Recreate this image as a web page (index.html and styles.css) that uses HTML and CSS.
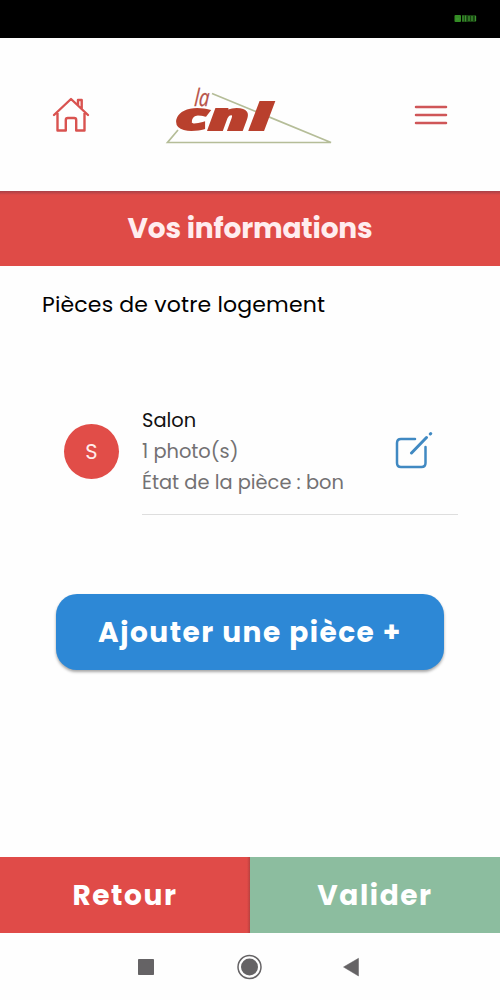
FILE: index.html
```html
<!DOCTYPE html>
<html lang="fr">
<head>
<meta charset="utf-8">
<meta name="viewport" content="width=device-width, initial-scale=1">
<title>Vos informations</title>
<link rel="stylesheet" href="styles.css">
</head>
<body>
<div class="status-bar">
  <svg class="battery" width="23" height="9" viewBox="0 0 23 9">
    <rect x="0.5" y="1" width="6.5" height="7" rx="1" fill="#348c25"/>
    <path d="M8 1h14v7H8z" fill="#215d18" opacity=".7"/>
    <path d="M2 5h3M9 1.500v6M11.500 1.500v6M15 2v5M18 2v5M21.500 2v5" stroke="#3d9430" stroke-width="1.300"/>
  </svg>
</div>
<header class="header">
  <svg class="home" width="38" height="38" viewBox="0 0 38 38" fill="none" stroke="#d95350" stroke-width="2.400" stroke-linecap="round" stroke-linejoin="round">
    <path d="M2 19 19 3l17 16M5.500 17v17.500h8.300V24q0-2 2-2h6.400q2 0 2 2v10.500h8.300V17M26 9V4h3.700v9"/>
  </svg>
  <svg class="logo" width="170" height="60" viewBox="0 0 170 60">
    <path d="M48 8.500 167 57.500H3.500L14 45" fill="none" stroke="#b5bd98" stroke-width="1.700"/>
    <text class="logo-la" transform="translate(30 21) skewX(-4) scale(.76 1)">la</text>
    <text class="logo-cnl" x="11" y="45" textLength="96" lengthAdjust="spacingAndGlyphs">cnl</text>
  </svg>
  <svg class="menu" width="34" height="22" viewBox="0 0 34 22" stroke="#cf5658" stroke-width="2.500" stroke-linecap="round">
    <path d="M2 3h30M2 11h30M2 19h30"/>
  </svg>
</header>
<h1 class="title"><span>Vos informations</span></h1>
<main class="content">
  <h2 class="subtitle"><span>Pièces de votre logement</span></h2>
  <div class="room">
    <div class="avatar">S</div>
    <div class="room-body">
      <div class="room-text">
        <div class="room-name">Salon</div>
        <div class="room-photos">1 photo(s)</div>
        <div class="room-state">État de la pièce : bon</div>
      </div>
      <svg class="edit" width="38" height="38" viewBox="0 0 38 38" fill="none" stroke="#4089c2" stroke-width="2.500" stroke-linecap="round" stroke-linejoin="round">
        <path d="M20 7H6q-4 0-4 4v20q0 4 4 4h20.500q4 0 4-4V15"/>
        <path d="M16.500 21 31.500 5.500M35.300 2l.4-.4" stroke-width="3"/>
      </svg>
    </div>
  </div>
  <button class="add"><span>Ajouter une pièce +</span></button>
</main>
<footer class="actions">
  <button class="back"><span>Retour</span></button>
  <button class="submit"><span>Valider</span></button>
</footer>
<nav class="system-nav">
  <svg width="500" height="67" viewBox="0 0 500 67" fill="#656365">
    <rect x="138" y="26" width="16" height="16" rx=".8"/>
    <circle cx="249.500" cy="34" r="8.500"/>
    <circle cx="249.500" cy="34" r="11.500" fill="none" stroke="#656365" stroke-width="1.500"/>
    <path d="M343.500 34 358.500 25.300V43z" stroke="#656365" stroke-width=".5" stroke-linejoin="round"/>
  </svg>
</nav>
</body>
</html>
```
FILE: styles.css
```css
* { box-sizing: border-box; }
body {
  margin: 0;
  width: 500px;
  height: 1000px;
  display: flex;
  flex-direction: column;
  overflow: hidden;
  background: #fefefe;
  color: #111;
  font-family: Poppins, Inter, "Open Sans", sans-serif;
}
h1, h2 { margin: 0; }
button {
  border: 0;
  padding: 2px 0 0;
  color: #fff;
  font: 700 28px/1 Poppins, Inter, sans-serif;
}
.status-bar {
  height: 38px;
  background: #000;
  display: flex;
  justify-content: flex-end;
  padding: 14px 23px 0 0;
}
.header {
  height: 153px;
  display: flex;
  align-items: center;
  padding: 0 52px;
}
.logo { margin-left: 74px; overflow: visible; }
.menu { margin-left: auto; }
.logo-la { font: italic 400 24px "Open Sans", sans-serif; fill: #b75147; stroke: #b75147; stroke-width: .3; }
.logo-cnl { font: italic 800 37px "Open Sans", sans-serif; fill: #b9402d; stroke: #b9402d; stroke-width: 1.8; }
.title {
  height: 75px;
  display: flex;
  align-items: center;
  justify-content: center;
  background: linear-gradient(#a84148, #df4b47 4px);
  color: #ffedef;
  font-size: 28px;
  line-height: 1;
  font-weight: 700;
  letter-spacing: -.15px;
}
.content { height: 591px; padding: 23px 42px 0; }
.subtitle { font-size: 22px; line-height: 32px; font-weight: 400; letter-spacing: .17px; color: #000; }
.room { display: flex; align-items: center; margin-top: 84px; padding-left: 22px; }
.avatar {
  width: 55px;
  height: 55px;
  margin: 0 23px 17px 0;
  border-radius: 50%;
  background: #e14d48;
  color: #ffeceb;
  font-size: 21px;
  line-height: 55px;
  text-align: center;
}
.room-body {
  flex: 1;
  height: 110px;
  display: flex;
  justify-content: space-between;
  border-bottom: 1px solid #dedede;
}
.room-text { font-size: 19.4px; line-height: 31px; color: #737173; white-space: nowrap; }
.room-name { color: #111; }
.edit { margin: 27px 25px 0 0; }
.add {
  display: block;
  width: 388px;
  height: 76px;
  margin: 79px 0 0 14px;
  border-radius: 21px;
  background: #2d88d6;
  letter-spacing: 1.5px;
  box-shadow: 0 2px 3px rgba(0, 0, 0, .35);
}
.actions { height: 76px; display: grid; grid-template-columns: 1fr 1fr; }
.actions button { letter-spacing: 1.6px; }
.actions .back { background: linear-gradient(to left, #b8413f, #e04b48 3px); }
.actions .submit { background: #8cbd9f; }
.system-nav { height: 67px; }
.system-nav svg { display: block; }
```
